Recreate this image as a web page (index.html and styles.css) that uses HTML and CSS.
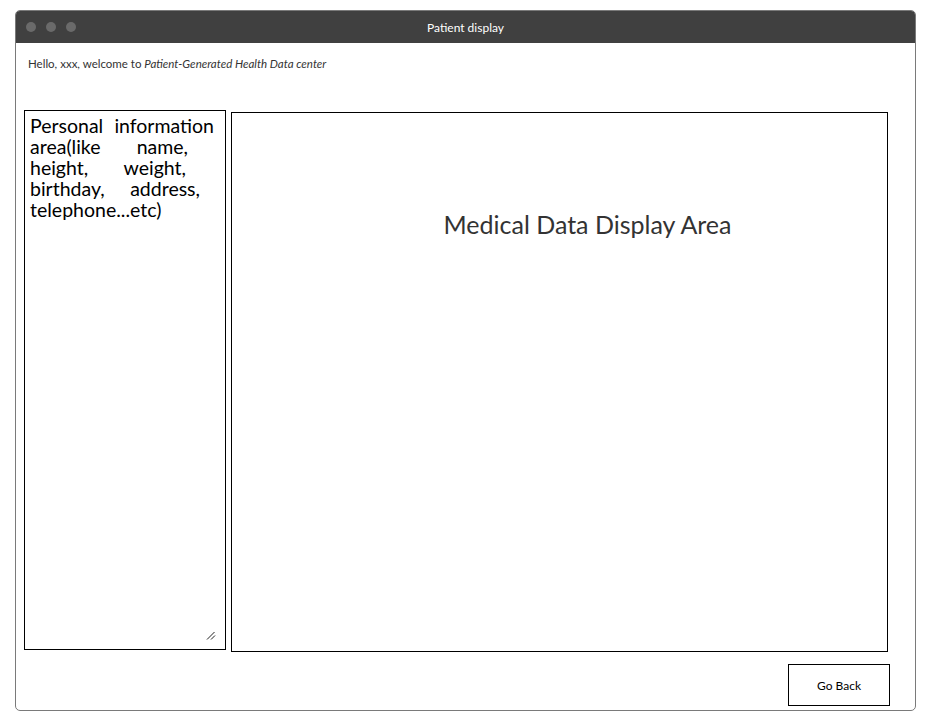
FILE: index.html
```html
<!DOCTYPE html>
<html lang="en">
<head>
<meta charset="utf-8">
<title>Patient display</title>
<link rel="stylesheet" href="styles.css">
</head>
<body>
<div class="window">
  <div class="titlebar">
    <div class="dots"><span class="dot"></span><span class="dot"></span><span class="dot"></span></div>
    <div class="title">Patient display</div>
    <div class="spacer"></div>
  </div>
  <div class="content">
    <p class="greeting">Hello, xxx, welcome to <em>Patient-Generated Health Data center</em></p>
    <div class="panels">
      <div class="personal">
        <div class="line l1"><span>Personal</span> <span>information</span></div>
        <div class="line l2"><span>area(like</span> <span>name,</span></div>
        <div class="line l3"><span>height,</span> <span>weight,</span></div>
        <div class="line l4"><span>birthday,</span> <span>address,</span></div>
        <div class="line"><span>telephone...etc)</span></div>
        <svg class="grip" width="10" height="10" viewBox="0 0 10 10" aria-hidden="true">
          <line x1="1" y1="9.5" x2="8.5" y2="2" stroke="#222" stroke-width="1"/>
          <line x1="5" y1="9.5" x2="9" y2="5.5" stroke="#222" stroke-width="1"/>
        </svg>
      </div>
      <div class="medical"><p class="medical-title">Medical Data Display Area</p></div>
    </div>
    <div class="actions">
      <button class="back">Go Back</button>
    </div>
  </div>
</div>
</body>
</html>
```
FILE: styles.css
```css
* { box-sizing: border-box; }
html, body { margin: 0; padding: 0; background: #ffffff; }
body { font-family: Lato, "Open Sans", sans-serif; }
.window {
  margin: 10px 0 0 15px;
  width: 901px;
  height: 701px;
  border: 1px solid #7a7a7a;
  border-radius: 5px;
  overflow: hidden;
  display: flex;
  flex-direction: column;
  background: #fff;
}
.titlebar {
  height: 32px;
  background: #404040;
  display: grid;
  grid-template-columns: 1fr auto 1fr;
  align-items: center;
  flex: none;
}
.dots { display: flex; gap: 10px; padding-left: 10px; }
.dot { width: 10px; height: 10px; border-radius: 50%; background: #6a6a6a; }
.title { color: #ffffff; font-size: 12px; }
.content {
  flex: 1;
  display: flex;
  flex-direction: column;
  padding: 0 25px 0 8px;
}
.greeting {
  margin: 14px 0 0 4px;
  font-size: 11.5px;
  line-height: 14px;
  color: #333;
}
.greeting em { font-style: italic; }
.panels {
  display: flex;
  gap: 5px;
  margin-top: 39px;
  align-items: flex-start;
}
.personal {
  position: relative;
  width: 202px;
  height: 540px;
  border: 1px solid #000;
  padding: 4px 5px 3px;
  font-size: 19.5px;
  line-height: 21px;
  color: #000;
}
.line { display: flex; justify-content: space-between; white-space: nowrap; }
.l1 { width: 184px; }
.l2 { width: 158px; }
.l3 { width: 156px; }
.l4 { width: 170px; }
.grip { position: absolute; right: 9px; bottom: 9px; }
.medical {
  margin-top: 2px;
  width: 657px;
  height: 540px;
  border: 1px solid #000;
  padding: 96px 0 0 56px;
}
.medical-title {
  margin: 0;
  text-align: center;
  font-size: 25px;
  line-height: 30px;
  color: #333;
}
.actions {
  display: flex;
  justify-content: flex-end;
  margin-top: 12px;
}
.back {
  width: 102px;
  height: 42px;
  border: 1px solid #000;
  background: #fff;
  font-family: Lato, "Open Sans", sans-serif;
  font-size: 12px;
  color: #000;
  padding: 0;
}
```
